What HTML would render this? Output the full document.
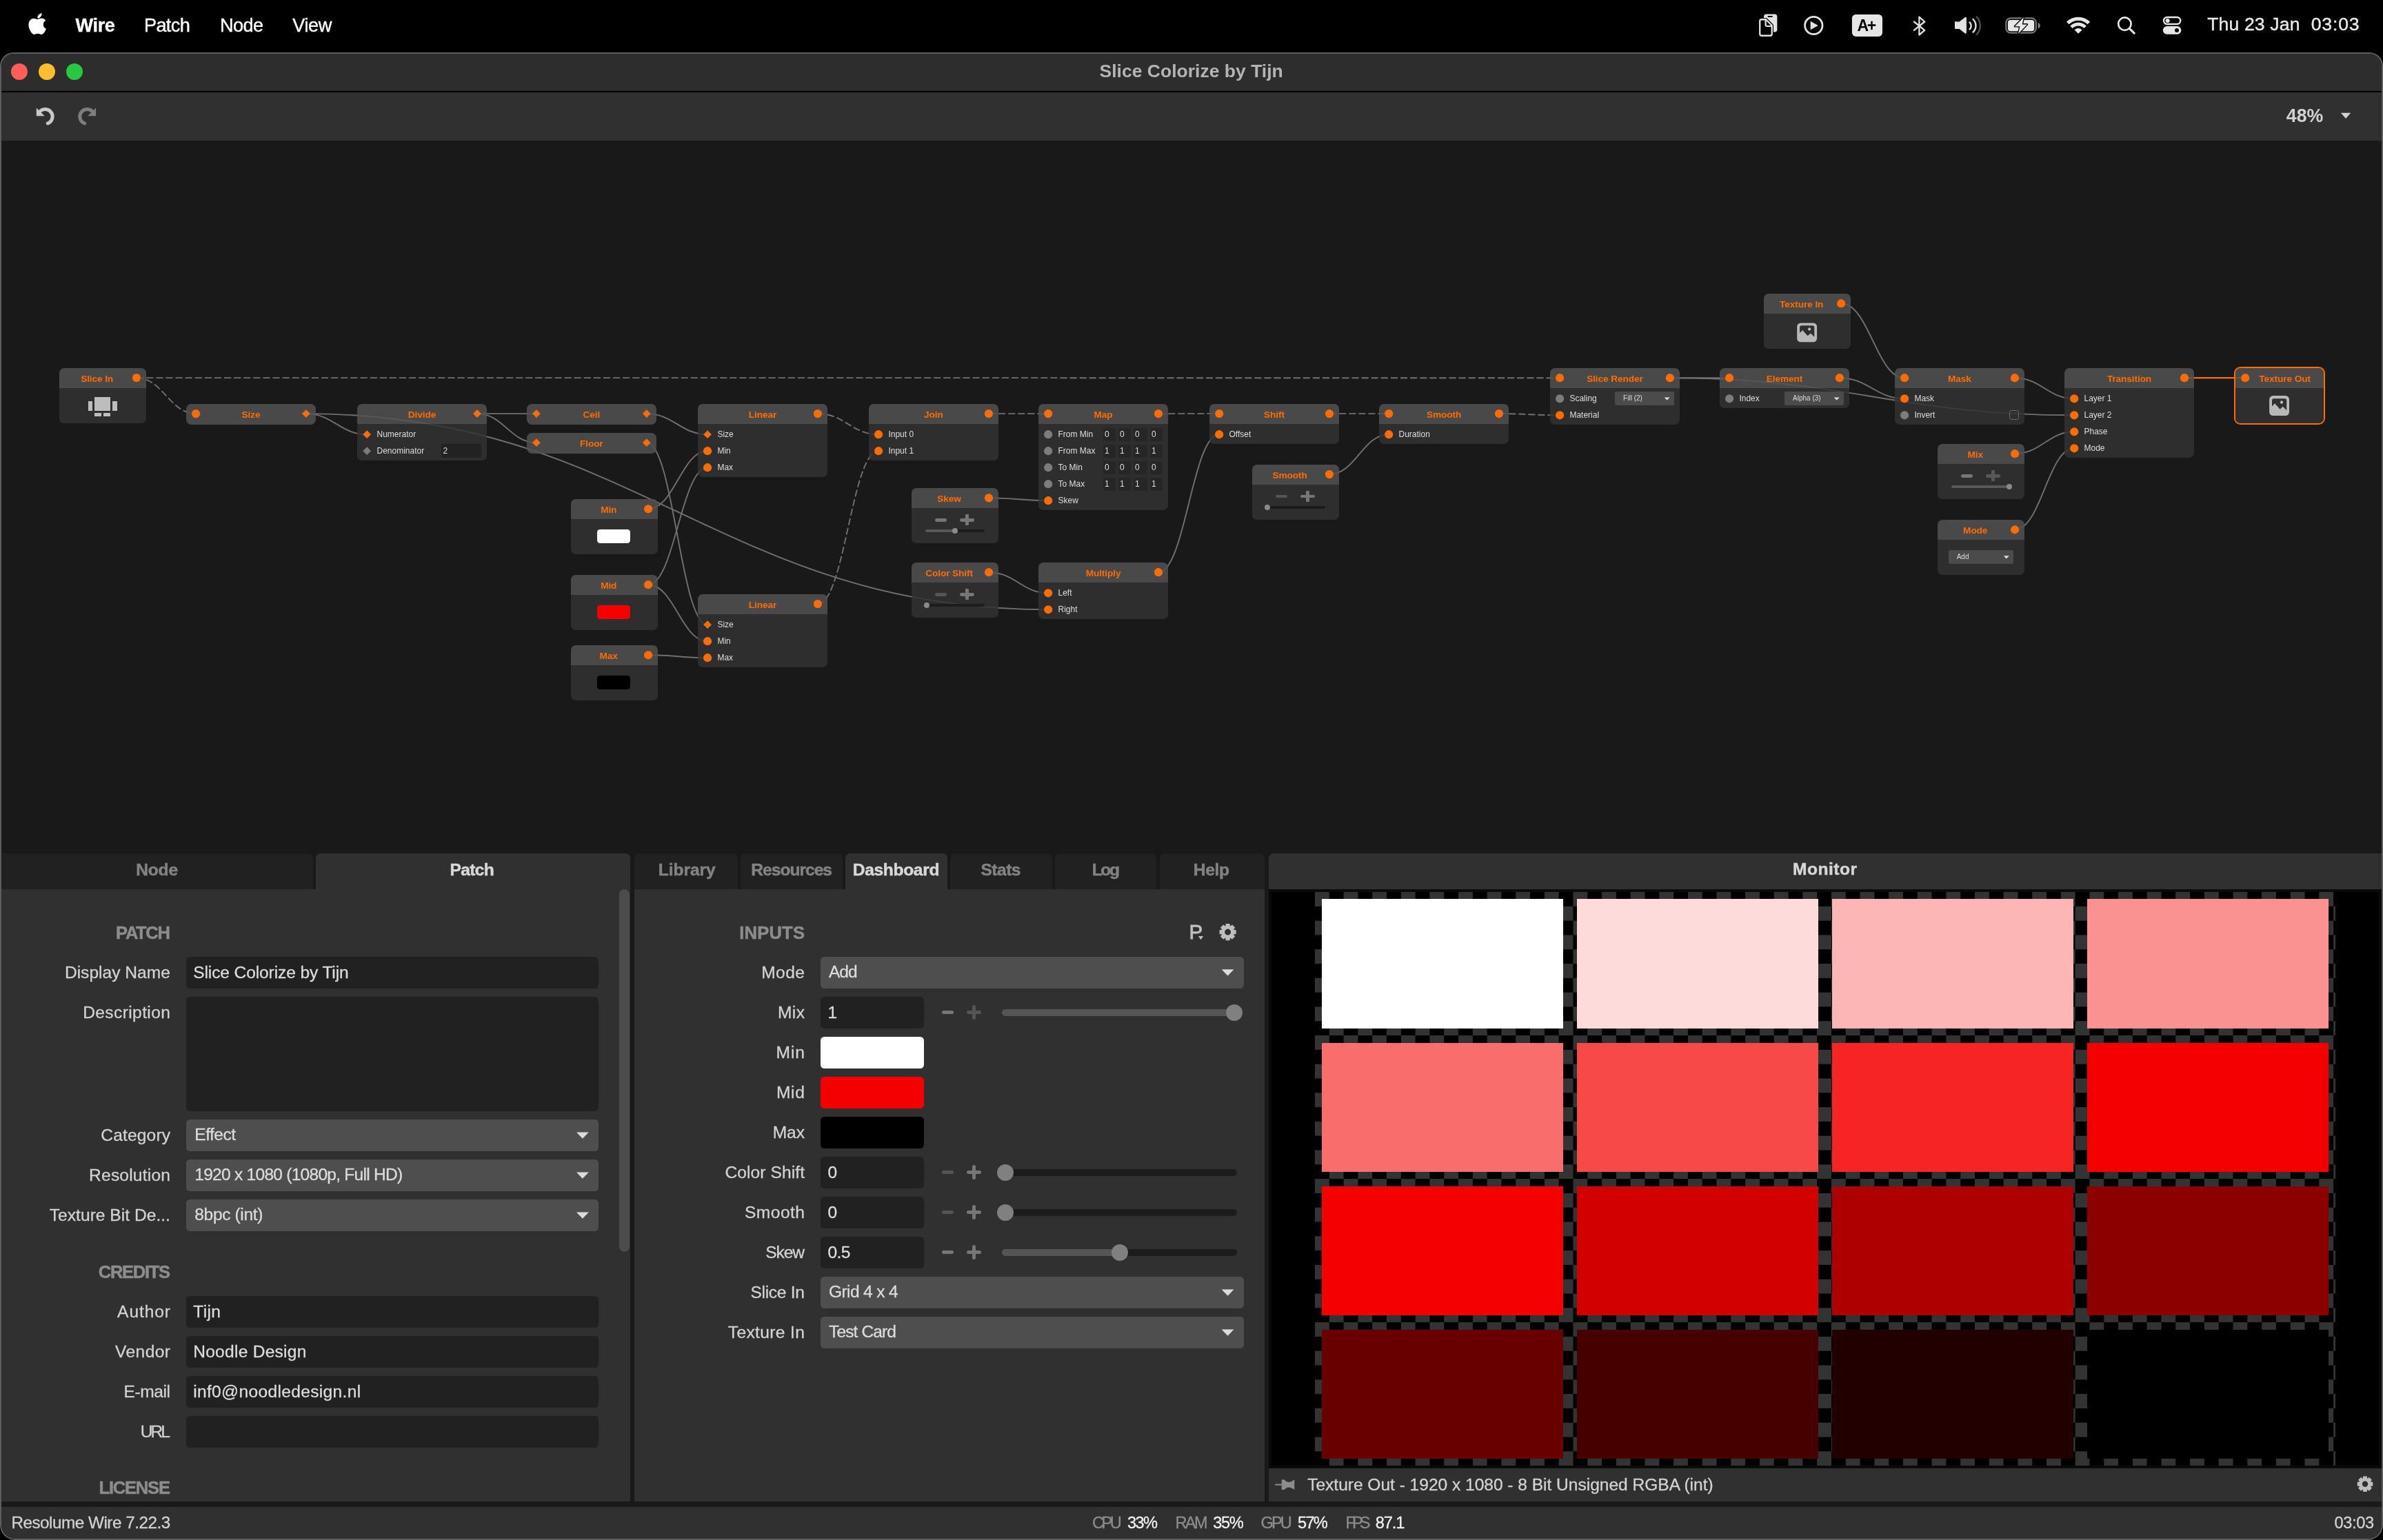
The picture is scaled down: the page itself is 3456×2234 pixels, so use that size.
<!DOCTYPE html>
<html lang="en"><head><meta charset="utf-8"><title>Slice Colorize by Tijn - Resolume Wire</title>
<style>
html,body{margin:0;padding:0;background:#000;}
body{width:3456px;height:2234px;position:relative;overflow:hidden;font-family:"Liberation Sans",sans-serif;-webkit-font-smoothing:antialiased;}
.t{position:absolute;white-space:pre;display:block;}
.b{position:absolute;box-sizing:border-box;}
svg{position:absolute;left:0;top:0;overflow:visible;}
</style></head><body>
<div id="screen" style="position:absolute;left:0;top:0;width:3456px;height:2234px;will-change:transform">
<div class="b" id="menubar" style="left:0;top:0;width:3456px;height:76px;background:#000"></div>
<span class="t" style="left:109.4px;top:18.88px;font-size:27.2px;line-height:35px;color:#ffffff;font-weight:700;letter-spacing:-0.37px;-webkit-text-stroke:0.3px #ffffff;">Wire</span>
<span class="t" style="left:209px;top:18.88px;font-size:27.2px;line-height:35px;color:#ffffff;letter-spacing:-0.69px;-webkit-text-stroke:0.4px #ffffff;">Patch</span>
<span class="t" style="left:318.9px;top:18.88px;font-size:27.2px;line-height:35px;color:#ffffff;letter-spacing:-0.61px;-webkit-text-stroke:0.4px #ffffff;">Node</span>
<span class="t" style="left:424.2px;top:18.88px;font-size:27.2px;line-height:35px;color:#ffffff;letter-spacing:-0.39px;-webkit-text-stroke:0.4px #ffffff;">View</span>
<span class="t" style="left:3201.2px;top:18.18px;font-size:26.6px;line-height:35px;color:#e8e8e8;letter-spacing:0.13px;-webkit-text-stroke:0.4px #e8e8e8;">Thu 23 Jan</span>
<span class="t" style="left:3351.7px;top:18.18px;font-size:26.6px;line-height:35px;color:#e8e8e8;letter-spacing:0.83px;-webkit-text-stroke:0.4px #e8e8e8;">03:03</span>
<svg id="menuicons" width="3456" height="76" viewBox="0 0 3456 76">
<path transform="translate(41.2,17.0) scale(0.0678,0.0688)" fill="#fff" d="M318.7 268.7c-.2-36.7 16.4-64.4 50-84.8-18.8-26.9-47.2-41.7-84.7-44.6-35.5-2.8-74.3 20.7-88.5 20.7-15 0-49.4-19.7-76.4-19.7C63.3 141.2 4 184.8 4 273.5q0 39.3 14.4 81.2c12.8 36.7 59 126.7 107.2 125.2 25.2-.6 43-17.9 75.8-17.9 31.8 0 48.3 17.9 76.4 17.9 48.6-.7 90.4-82.5 102.6-119.3-65.2-30.7-61.7-90-61.7-91.9zm-56.6-164.2c27.3-32.4 24.8-61.9 24-72.5-24.1 1.4-52 16.4-67.9 34.9-17.5 19.8-27.8 44.3-25.6 71.9 26.1 2 49.9-11.4 69.5-34.3z"/>
<rect x="2558" y="20.6" width="19.4" height="25.9" rx="3.8" fill="#e2e2e2"/>
<rect x="2563.5" y="23.1" width="7.4" height="1.8" rx="0.9" fill="#000"/>
<path d="M2554.75 28.25 H2561 L2569.75 37 V49.25 a2.5 2.5 0 0 1 -2.5 2.5 H2554.75 a2.5 2.5 0 0 1 -2.5 -2.5 V30.75 a2.5 2.5 0 0 1 2.5 -2.5 z" fill="#000" stroke="#000" stroke-width="4.6" stroke-linejoin="round"/>
<path d="M2554.75 28.25 H2561 L2569.75 37 V49.25 a2.5 2.5 0 0 1 -2.5 2.5 H2554.75 a2.5 2.5 0 0 1 -2.5 -2.5 V30.75 a2.5 2.5 0 0 1 2.5 -2.5 z" fill="#000" stroke="#e2e2e2" stroke-width="2.3" stroke-linejoin="round"/>
<path d="M2560.6 28.6 V35.8 a2.2 2.2 0 0 0 2.2 2.2 H2569.6" fill="none" stroke="#e2e2e2" stroke-width="2.2"/>
<circle cx="2630.3" cy="37" r="12.7" fill="none" stroke="#e2e2e2" stroke-width="2.8"/>
<path d="M2626 31.2 L2636.3 37 L2626 42.8 Z" fill="#e2e2e2" stroke="#e2e2e2" stroke-width="0.6" stroke-linejoin="round"/>
<rect x="2685.9" y="20.9" width="44.1" height="32" rx="5.6" fill="#e6e6e6"/>
<path d="M2775.9 31.5 L2791.2 43.8 L2783.4 50.6 V24.6 L2791.2 31.5 L2775.9 43.8" fill="none" stroke="#e2e2e2" stroke-width="2.3" stroke-linejoin="round" stroke-linecap="round"/>
<path d="M2836.6 31.4 h5 l8.4 -6.4 a1.2 1.2 0 0 1 1.9 1 v21.4 a1.2 1.2 0 0 1 -1.9 1 l-8.4 -6.4 h-5 a1.6 1.6 0 0 1 -1.6 -1.6 v-8.4 a1.6 1.6 0 0 1 1.6 -1.6 z" fill="#e2e2e2"/>
<path d="M2856.6 32.4 a7 7 0 0 1 0 10" fill="none" stroke="#e2e2e2" stroke-width="2.4" stroke-linecap="round"/>
<path d="M2861.6 28 a13.2 13.2 0 0 1 0 18.6" fill="none" stroke="#e2e2e2" stroke-width="2.4" stroke-linecap="round"/>
<path d="M2866.8 24.6 a18.6 18.6 0 0 1 0 25.4" fill="none" stroke="#505050" stroke-width="2.4" stroke-linecap="round"/>
<rect x="2909.3" y="26.3" width="43.5" height="21.4" rx="6.6" fill="none" stroke="#767676" stroke-width="2.2"/>
<path d="M2955.8 33.1 a4.3 4.3 0 0 1 0 8.1 z" fill="#8a8a8a"/>
<rect x="2911.9" y="28.9" width="38.3" height="16.4" rx="3.8" fill="#e6e6e6"/>
<path d="M2935 25 L2922 38.2 H2929.4 L2927.1 49 L2940 35.4 H2932.7 Z" fill="#e6e6e6" stroke="#000" stroke-width="2.6" stroke-linejoin="round" paint-order="stroke"/>
<path d="M2998.8 33.6 A21.6 21.6 0 0 1 3029.4 33.6" fill="none" stroke="#e6e6e6" stroke-width="5"/>
<path d="M3004 39.4 A14.2 14.2 0 0 1 3024.2 39.4" fill="none" stroke="#e6e6e6" stroke-width="4.8"/>
<path d="M3014.1 48.8 L3008.6 43.4 A7.7 7.7 0 0 1 3019.6 43.4 Z" fill="#e6e6e6"/>
<circle cx="3081.4" cy="34.6" r="9.2" fill="none" stroke="#e6e6e6" stroke-width="2.7"/>
<path d="M3088.2 41.4 L3095.2 48.2" stroke="#e6e6e6" stroke-width="3" stroke-linecap="round"/>
<rect x="3138" y="25" width="24.2" height="10" rx="5" fill="none" stroke="#e6e6e6" stroke-width="2.4"/>
<circle cx="3143.6" cy="30" r="3" fill="#e6e6e6"/>
<rect x="3136.8" y="38" width="26.6" height="11.8" rx="5.9" fill="#e6e6e6"/>
<circle cx="3157" cy="43.9" r="3" fill="#000"/>
</svg>
<span class="t" style="left:2693.55px;top:21.93px;font-size:23px;line-height:30px;color:#000;font-weight:700;letter-spacing:-2.34px;">A+</span>
<div class="b" id="window" style="left:0;top:76px;width:3456px;height:2158px;background:#191919;border-radius:20px 20px 22px 22px;overflow:hidden;box-shadow:inset 0 0 0 2px #5e5e5e;"></div>
<div class="b" id="titlebar" style="left:2px;top:78px;width:3452px;height:54.4px;background:#2d2d2d;border-radius:18px 18px 0 0"></div>
<div class="b" style="left:2px;top:132.2px;width:3452px;height:1.5px;background:#000"></div>
<div class="b" id="toolbar" style="left:2px;top:133.7px;width:3452px;height:70.2px;background:#303030"></div>
<div class="b" style="left:16px;top:92.1px;width:24px;height:24px;border-radius:50%;background:#ff5f57"></div>
<div class="b" style="left:56px;top:92.1px;width:24px;height:24px;border-radius:50%;background:#febc2e"></div>
<div class="b" style="left:96px;top:92.1px;width:24px;height:24px;border-radius:50%;background:#28c840"></div>
<span class="t" style="left:1594.55px;top:85.92px;font-size:26.5px;line-height:34px;color:#b4b4b4;font-weight:700;letter-spacing:0.01px;">Slice Colorize by Tijn</span>
<span class="t" style="left:3315.8px;top:151.43px;font-size:26.75px;line-height:35px;color:#d2d2d2;font-weight:700;letter-spacing:-0.02px;">48%</span>
<svg id="toolicons" width="3456" height="220" viewBox="0 0 3456 220">
<path d="M3394.9 163.8 h14.3 l-7.15 8.2 z" fill="#d2d2d2"/>
<g transform="translate(52.5,0)"><path d="M5.6 161.5 A10.6 10.6 0 1 1 16.7 179.0" fill="none" stroke="#c8c8c8" stroke-width="5" stroke-linecap="round"/><path d="M0.3 156.6 V168.3 H12.2 Z" fill="#c8c8c8"/></g>
<g transform="translate(139.4,0) scale(-1,1)"><path d="M5.6 161.5 A10.6 10.6 0 1 1 16.7 179.0" fill="none" stroke="#7e7e7e" stroke-width="5" stroke-linecap="round"/><path d="M0.3 156.6 V168.3 H12.2 Z" fill="#7e7e7e"/></g>
</svg>
<div class="b" id="statusbar" style="left:2px;top:2186px;width:3452px;height:46px;background:#303030;border-radius:0 0 20px 20px"></div>
<span class="t" style="left:16.4px;top:2193.18px;font-size:24.3px;line-height:32px;color:#d2d2d2;letter-spacing:-0.5px;-webkit-text-stroke:0.3px #d2d2d2;">Resolume Wire 7.22.3</span>
<span class="t" style="left:1584.1px;top:2194.12px;font-size:23.6px;line-height:31px;color:#8c8c8c;letter-spacing:-3.61px;-webkit-text-stroke:0.3px #8c8c8c;">CPU</span>
<span class="t" style="left:1635.1px;top:2194.12px;font-size:23.6px;line-height:31px;color:#f0f0f0;letter-spacing:-1.67px;-webkit-text-stroke:0.3px #f0f0f0;">33%</span>
<span class="t" style="left:1704.4px;top:2194.12px;font-size:23.6px;line-height:31px;color:#8c8c8c;letter-spacing:-2.62px;-webkit-text-stroke:0.3px #8c8c8c;">RAM</span>
<span class="t" style="left:1759.3px;top:2194.12px;font-size:23.6px;line-height:31px;color:#f0f0f0;letter-spacing:-1.37px;-webkit-text-stroke:0.3px #f0f0f0;">35%</span>
<span class="t" style="left:1828.6px;top:2194.12px;font-size:23.6px;line-height:31px;color:#8c8c8c;letter-spacing:-3.02px;-webkit-text-stroke:0.3px #8c8c8c;">GPU</span>
<span class="t" style="left:1882.1px;top:2194.12px;font-size:23.6px;line-height:31px;color:#f0f0f0;letter-spacing:-1.82px;-webkit-text-stroke:0.3px #f0f0f0;">57%</span>
<span class="t" style="left:1951.5px;top:2194.12px;font-size:23.6px;line-height:31px;color:#8c8c8c;letter-spacing:-5px;-webkit-text-stroke:0.3px #8c8c8c;">FPS</span>
<span class="t" style="left:1994.7px;top:2194.12px;font-size:23.6px;line-height:31px;color:#f0f0f0;letter-spacing:-1.11px;-webkit-text-stroke:0.3px #f0f0f0;">87.1</span>
<span class="t" style="left:3385.5px;top:2194.12px;font-size:23.6px;line-height:31px;color:#d2d2d2;letter-spacing:-0.34px;-webkit-text-stroke:0.3px #d2d2d2;">03:03</span>
<div class="b" id="canvas" style="left:2px;top:203.9px;width:3452px;height:1034.1px;background:#191919"></div>
<svg id="wires" width="3456" height="1240" viewBox="0 0 3456 1240"><g fill="none" stroke="#707070" stroke-width="1.9">
<path d="M198 548.1 C1106.2 548.1 1353.9 548.2 2262.1 548.2" stroke-dasharray="10.2 3.9"/>
<path d="M198 548.1 C235.88 548.1 246.22 600.1 284.1 600.1" stroke-dasharray="10.2 3.9"/>
<path d="M443.9 600.1 C482.75 600.1 493.35 630.2 532.2 630.2"/>
<path d="M443.9 600.1 C917.47 600.1 1046.63 884.3 1520.2 884.3"/>
<path d="M692 600.1 C729.82 600.1 740.13 600.1 777.95 600.1"/>
<path d="M692 600.1 C729.82 600.1 740.13 642.2 777.95 642.2"/>
<path d="M937.75 600.1 C976.62 600.1 987.23 630.2 1026.1 630.2"/>
<path d="M937.75 642.2 C976.62 642.2 987.23 906.2 1026.1 906.2"/>
<path d="M940.1 738.3 C977.94 738.3 988.26 654.2 1026.1 654.2"/>
<path d="M940.1 848.2 C977.94 848.2 988.26 678.2 1026.1 678.2"/>
<path d="M940.1 848.2 C977.94 848.2 988.26 930.2 1026.1 930.2"/>
<path d="M940.1 950.3 C977.94 950.3 988.26 954.2 1026.1 954.2"/>
<path d="M1185.9 600.1 C1224.71 600.1 1235.29 630.2 1274.1 630.2" stroke-dasharray="10.2 3.9"/>
<path d="M1185.9 876.1 C1224.71 876.1 1235.29 654.2 1274.1 654.2" stroke-dasharray="10.2 3.9"/>
<path d="M1433.9 600.1 C1471.87 600.1 1482.23 600.1 1520.2 600.1" stroke-dasharray="10.2 3.9"/>
<path d="M1434 722.4 C1471.93 722.4 1482.27 726.2 1520.2 726.2"/>
<path d="M1434 830.2 C1471.93 830.2 1482.27 860.3 1520.2 860.3"/>
<path d="M1680 600.1 C1718.81 600.1 1729.39 600.1 1768.2 600.1" stroke-dasharray="10.2 3.9"/>
<path d="M1680 830.2 C1718.81 830.2 1729.39 630.2 1768.2 630.2"/>
<path d="M1928 600.1 C1965.93 600.1 1976.27 600.1 2014.2 600.1" stroke-dasharray="10.2 3.9"/>
<path d="M1927.9 688.1 C1965.87 688.1 1976.23 630.2 2014.2 630.2"/>
<path d="M2174 600.1 C2212.76 600.1 2223.34 602.3 2262.1 602.3" stroke-dasharray="10.2 3.9"/>
<path d="M2421.9 548.2 C2459.83 548.2 2470.17 548.2 2508.1 548.2"/>
<path d="M2421.9 548.2 C2679.87 548.2 2750.23 602.3 3008.2 602.3"/>
<path d="M2667.9 548.2 C2709.35 548.2 2720.65 578.3 2762.1 578.3"/>
<path d="M2670.1 440.2 C2710.58 440.2 2721.62 548.2 2762.1 548.2"/>
<path d="M2921.9 548.2 C2959.87 548.2 2970.23 578.3 3008.2 578.3"/>
<path d="M2922.1 658.2 C2959.98 658.2 2970.32 626.3 3008.2 626.3"/>
<path d="M2922.1 768.3 C2959.98 768.3 2970.32 650.3 3008.2 650.3"/>
<path d="M3168 548.2 C3207.16 548.2 3217.84 548.2 3257 548.2" stroke="#ff6c00" stroke-width="2.2"/>
</g></svg>
<div id="nodes">
<div class="b" style="left:86px;top:562.8px;width:126px;height:51px;background:rgba(51,51,51,0.85);border-radius:0 0 7px 7px;"></div>
<div class="b" style="left:86px;top:534px;width:126px;height:28.8px;background:rgba(82,82,82,0.85);border-radius:7px 7px 0 0;"></div>
<span class="t" style="left:117.13px;top:541.15px;font-size:13.7px;line-height:18px;color:#ff6c00;font-weight:700;letter-spacing:-0.12px;">Slice In</span>
<div class="b" style="left:137px;top:576.2px;width:23.3px;height:20.3px;background:#bdbdbd;"></div>
<div class="b" style="left:127.7px;top:582.3px;width:6.5px;height:14.2px;background:#bdbdbd;"></div>
<div class="b" style="left:163.2px;top:582.3px;width:6.5px;height:14.2px;background:#bdbdbd;"></div>
<div class="b" style="left:137px;top:599.2px;width:10.2px;height:4.7px;background:#bdbdbd;"></div>
<div class="b" style="left:149.7px;top:599.2px;width:10.4px;height:4.7px;background:#bdbdbd;"></div>
<div class="b" style="left:270.1px;top:586px;width:187.8px;height:29.5px;background:rgba(82,82,82,0.85);border-radius:7.5px;"></div>
<span class="t" style="left:350.47px;top:593.15px;font-size:13.7px;line-height:18px;color:#ff6c00;font-weight:700;letter-spacing:-0.12px;">Size</span>
<div class="b" style="left:518.2px;top:614.8px;width:187.8px;height:53px;background:rgba(51,51,51,0.85);border-radius:0 0 7px 7px;"></div>
<div class="b" style="left:518.2px;top:586px;width:187.8px;height:28.8px;background:rgba(82,82,82,0.85);border-radius:7px 7px 0 0;"></div>
<span class="t" style="left:591.84px;top:593.15px;font-size:13.7px;line-height:18px;color:#ff6c00;font-weight:700;letter-spacing:-0.12px;">Divide</span>
<span class="t" style="left:546.5px;top:622.04px;font-size:12px;line-height:16px;color:#dedede;">Numerator</span>
<span class="t" style="left:546.5px;top:646.04px;font-size:12px;line-height:16px;color:#dedede;">Denominator</span>
<div class="b" style="left:640.2px;top:644.35px;width:57.7px;height:19.7px;background:#222222;border-radius:3px;"></div>
<span class="t" style="left:642.4px;top:646.04px;font-size:12px;line-height:16px;color:#dedede;">2</span>
<div class="b" style="left:763.95px;top:586px;width:187.8px;height:29.5px;background:rgba(82,82,82,0.85);border-radius:7.5px;"></div>
<span class="t" style="left:845.47px;top:593.15px;font-size:13.7px;line-height:18px;color:#ff6c00;font-weight:700;letter-spacing:-0.12px;">Ceil</span>
<div class="b" style="left:763.95px;top:628.1px;width:187.8px;height:29.5px;background:rgba(82,82,82,0.85);border-radius:7.5px;"></div>
<span class="t" style="left:840.97px;top:635.25px;font-size:13.7px;line-height:18px;color:#ff6c00;font-weight:700;letter-spacing:-0.12px;">Floor</span>
<div class="b" style="left:1012.1px;top:614.8px;width:187.8px;height:77px;background:rgba(51,51,51,0.85);border-radius:0 0 7px 7px;"></div>
<div class="b" style="left:1012.1px;top:586px;width:187.8px;height:28.8px;background:rgba(82,82,82,0.85);border-radius:7px 7px 0 0;"></div>
<span class="t" style="left:1085.74px;top:593.15px;font-size:13.7px;line-height:18px;color:#ff6c00;font-weight:700;letter-spacing:-0.12px;">Linear</span>
<span class="t" style="left:1040.4px;top:622.04px;font-size:12px;line-height:16px;color:#dedede;">Size</span>
<span class="t" style="left:1040.4px;top:646.04px;font-size:12px;line-height:16px;color:#dedede;">Min</span>
<span class="t" style="left:1040.4px;top:670.04px;font-size:12px;line-height:16px;color:#dedede;">Max</span>
<div class="b" style="left:1260.1px;top:614.8px;width:187.8px;height:53px;background:rgba(51,51,51,0.85);border-radius:0 0 7px 7px;"></div>
<div class="b" style="left:1260.1px;top:586px;width:187.8px;height:28.8px;background:rgba(82,82,82,0.85);border-radius:7px 7px 0 0;"></div>
<span class="t" style="left:1340.1px;top:593.15px;font-size:13.7px;line-height:18px;color:#ff6c00;font-weight:700;letter-spacing:-0.12px;">Join</span>
<span class="t" style="left:1288.4px;top:622.04px;font-size:12px;line-height:16px;color:#dedede;">Input 0</span>
<span class="t" style="left:1288.4px;top:646.04px;font-size:12px;line-height:16px;color:#dedede;">Input 1</span>
<div class="b" style="left:1506.2px;top:614.8px;width:187.8px;height:125px;background:rgba(51,51,51,0.85);border-radius:0 0 7px 7px;"></div>
<div class="b" style="left:1506.2px;top:586px;width:187.8px;height:28.8px;background:rgba(82,82,82,0.85);border-radius:7px 7px 0 0;"></div>
<span class="t" style="left:1586.52px;top:593.15px;font-size:13.7px;line-height:18px;color:#ff6c00;font-weight:700;letter-spacing:-0.12px;">Map</span>
<span class="t" style="left:1534.5px;top:622.04px;font-size:12px;line-height:16px;color:#dedede;">From Min</span>
<div class="b" style="left:1600px;top:620.5px;width:17.9px;height:19.4px;background:#262626;border-radius:2.5px;"></div>
<span class="t" style="left:1602px;top:622.04px;font-size:12px;line-height:16px;color:#dedede;">0</span>
<div class="b" style="left:1622px;top:620.5px;width:17.9px;height:19.4px;background:#262626;border-radius:2.5px;"></div>
<span class="t" style="left:1624px;top:622.04px;font-size:12px;line-height:16px;color:#dedede;">0</span>
<div class="b" style="left:1644px;top:620.5px;width:19.8px;height:19.4px;background:#262626;border-radius:2.5px;"></div>
<span class="t" style="left:1646px;top:622.04px;font-size:12px;line-height:16px;color:#dedede;">0</span>
<div class="b" style="left:1668px;top:620.5px;width:17.9px;height:19.4px;background:#262626;border-radius:2.5px;"></div>
<span class="t" style="left:1670px;top:622.04px;font-size:12px;line-height:16px;color:#dedede;">0</span>
<span class="t" style="left:1534.5px;top:646.04px;font-size:12px;line-height:16px;color:#dedede;">From Max</span>
<div class="b" style="left:1600px;top:644.5px;width:17.9px;height:19.4px;background:#262626;border-radius:2.5px;"></div>
<span class="t" style="left:1602px;top:646.04px;font-size:12px;line-height:16px;color:#dedede;">1</span>
<div class="b" style="left:1622px;top:644.5px;width:17.9px;height:19.4px;background:#262626;border-radius:2.5px;"></div>
<span class="t" style="left:1624px;top:646.04px;font-size:12px;line-height:16px;color:#dedede;">1</span>
<div class="b" style="left:1644px;top:644.5px;width:19.8px;height:19.4px;background:#262626;border-radius:2.5px;"></div>
<span class="t" style="left:1646px;top:646.04px;font-size:12px;line-height:16px;color:#dedede;">1</span>
<div class="b" style="left:1668px;top:644.5px;width:17.9px;height:19.4px;background:#262626;border-radius:2.5px;"></div>
<span class="t" style="left:1670px;top:646.04px;font-size:12px;line-height:16px;color:#dedede;">1</span>
<span class="t" style="left:1534.5px;top:670.04px;font-size:12px;line-height:16px;color:#dedede;">To Min</span>
<div class="b" style="left:1600px;top:668.5px;width:17.9px;height:19.4px;background:#262626;border-radius:2.5px;"></div>
<span class="t" style="left:1602px;top:670.04px;font-size:12px;line-height:16px;color:#dedede;">0</span>
<div class="b" style="left:1622px;top:668.5px;width:17.9px;height:19.4px;background:#262626;border-radius:2.5px;"></div>
<span class="t" style="left:1624px;top:670.04px;font-size:12px;line-height:16px;color:#dedede;">0</span>
<div class="b" style="left:1644px;top:668.5px;width:19.8px;height:19.4px;background:#262626;border-radius:2.5px;"></div>
<span class="t" style="left:1646px;top:670.04px;font-size:12px;line-height:16px;color:#dedede;">0</span>
<div class="b" style="left:1668px;top:668.5px;width:17.9px;height:19.4px;background:#262626;border-radius:2.5px;"></div>
<span class="t" style="left:1670px;top:670.04px;font-size:12px;line-height:16px;color:#dedede;">0</span>
<span class="t" style="left:1534.5px;top:694.04px;font-size:12px;line-height:16px;color:#dedede;">To Max</span>
<div class="b" style="left:1600px;top:692.5px;width:17.9px;height:19.4px;background:#262626;border-radius:2.5px;"></div>
<span class="t" style="left:1602px;top:694.04px;font-size:12px;line-height:16px;color:#dedede;">1</span>
<div class="b" style="left:1622px;top:692.5px;width:17.9px;height:19.4px;background:#262626;border-radius:2.5px;"></div>
<span class="t" style="left:1624px;top:694.04px;font-size:12px;line-height:16px;color:#dedede;">1</span>
<div class="b" style="left:1644px;top:692.5px;width:19.8px;height:19.4px;background:#262626;border-radius:2.5px;"></div>
<span class="t" style="left:1646px;top:694.04px;font-size:12px;line-height:16px;color:#dedede;">1</span>
<div class="b" style="left:1668px;top:692.5px;width:17.9px;height:19.4px;background:#262626;border-radius:2.5px;"></div>
<span class="t" style="left:1670px;top:694.04px;font-size:12px;line-height:16px;color:#dedede;">1</span>
<span class="t" style="left:1534.5px;top:718.04px;font-size:12px;line-height:16px;color:#dedede;">Skew</span>
<div class="b" style="left:1754.2px;top:614.8px;width:187.8px;height:29px;background:rgba(51,51,51,0.85);border-radius:0 0 7px 7px;"></div>
<div class="b" style="left:1754.2px;top:586px;width:187.8px;height:28.8px;background:rgba(82,82,82,0.85);border-radius:7px 7px 0 0;"></div>
<span class="t" style="left:1833.12px;top:593.15px;font-size:13.7px;line-height:18px;color:#ff6c00;font-weight:700;letter-spacing:-0.12px;">Shift</span>
<span class="t" style="left:1782.5px;top:622.04px;font-size:12px;line-height:16px;color:#dedede;">Offset</span>
<div class="b" style="left:2000.2px;top:614.8px;width:187.8px;height:29px;background:rgba(51,51,51,0.85);border-radius:0 0 7px 7px;"></div>
<div class="b" style="left:2000.2px;top:586px;width:187.8px;height:28.8px;background:rgba(82,82,82,0.85);border-radius:7px 7px 0 0;"></div>
<span class="t" style="left:2068.91px;top:593.15px;font-size:13.7px;line-height:18px;color:#ff6c00;font-weight:700;letter-spacing:-0.12px;">Smooth</span>
<span class="t" style="left:2028.5px;top:622.04px;font-size:12px;line-height:16px;color:#dedede;">Duration</span>
<div class="b" style="left:2248.1px;top:562.9px;width:187.8px;height:53px;background:rgba(51,51,51,0.85);border-radius:0 0 7px 7px;"></div>
<div class="b" style="left:2248.1px;top:534.1px;width:187.8px;height:28.8px;background:rgba(82,82,82,0.85);border-radius:7px 7px 0 0;"></div>
<span class="t" style="left:2301.16px;top:541.25px;font-size:13.7px;line-height:18px;color:#ff6c00;font-weight:700;letter-spacing:-0.12px;">Slice Render</span>
<span class="t" style="left:2276.4px;top:570.14px;font-size:12px;line-height:16px;color:#dedede;">Scaling</span>
<div class="b" style="left:2342px;top:568.45px;width:86px;height:19.7px;background:#4b4b4b;border-radius:2.5px;"></div>
<span class="t" style="left:2354.1px;top:570.94px;font-size:10px;line-height:13px;color:#dedede;">Fill (2)</span>
<span class="t" style="left:2276.4px;top:594.14px;font-size:12px;line-height:16px;color:#dedede;">Material</span>
<div class="b" style="left:2494.1px;top:562.9px;width:187.8px;height:29px;background:rgba(51,51,51,0.85);border-radius:0 0 7px 7px;"></div>
<div class="b" style="left:2494.1px;top:534.1px;width:187.8px;height:28.8px;background:rgba(82,82,82,0.85);border-radius:7px 7px 0 0;"></div>
<span class="t" style="left:2561.71px;top:541.25px;font-size:13.7px;line-height:18px;color:#ff6c00;font-weight:700;letter-spacing:-0.12px;">Element</span>
<span class="t" style="left:2522.4px;top:570.14px;font-size:12px;line-height:16px;color:#dedede;">Index</span>
<div class="b" style="left:2588px;top:568.45px;width:86px;height:19.7px;background:#4b4b4b;border-radius:2.5px;"></div>
<span class="t" style="left:2600.1px;top:570.94px;font-size:10px;line-height:13px;color:#dedede;">Alpha (3)</span>
<div class="b" style="left:2748.1px;top:562.9px;width:187.8px;height:53px;background:rgba(51,51,51,0.85);border-radius:0 0 7px 7px;"></div>
<div class="b" style="left:2748.1px;top:534.1px;width:187.8px;height:28.8px;background:rgba(82,82,82,0.85);border-radius:7px 7px 0 0;"></div>
<span class="t" style="left:2825.04px;top:541.25px;font-size:13.7px;line-height:18px;color:#ff6c00;font-weight:700;letter-spacing:-0.12px;">Mask</span>
<span class="t" style="left:2776.4px;top:570.14px;font-size:12px;line-height:16px;color:#dedede;">Mask</span>
<span class="t" style="left:2776.4px;top:594.14px;font-size:12px;line-height:16px;color:#dedede;">Invert</span>
<div class="b" style="left:2913.9px;top:595.3px;width:14px;height:14px;background:transparent;border-radius:3.4px;border:1.6px solid #6c6c6c;"></div>
<div class="b" style="left:2994.2px;top:562.9px;width:187.8px;height:101px;background:rgba(51,51,51,0.85);border-radius:0 0 7px 7px;"></div>
<div class="b" style="left:2994.2px;top:534.1px;width:187.8px;height:28.8px;background:rgba(82,82,82,0.85);border-radius:7px 7px 0 0;"></div>
<span class="t" style="left:3055.91px;top:541.25px;font-size:13.7px;line-height:18px;color:#ff6c00;font-weight:700;letter-spacing:-0.12px;">Transition</span>
<span class="t" style="left:3022.5px;top:570.14px;font-size:12px;line-height:16px;color:#dedede;">Layer 1</span>
<span class="t" style="left:3022.5px;top:594.14px;font-size:12px;line-height:16px;color:#dedede;">Layer 2</span>
<span class="t" style="left:3022.5px;top:618.14px;font-size:12px;line-height:16px;color:#dedede;">Phase</span>
<span class="t" style="left:3022.5px;top:642.14px;font-size:12px;line-height:16px;color:#dedede;">Mode</span>
<div class="b" style="left:3239.9px;top:531.8px;width:132.2px;height:84.3px;background:transparent;border-radius:9.3px;border:2.3px solid #ff6c00;"></div>
<div class="b" style="left:3242.2px;top:562.9px;width:127.6px;height:51px;background:rgba(51,51,51,0.85);border-radius:0 0 7px 7px;"></div>
<div class="b" style="left:3242.2px;top:534.1px;width:127.6px;height:28.8px;background:rgba(82,82,82,0.85);border-radius:7px 7px 0 0;"></div>
<span class="t" style="left:3276.37px;top:541.25px;font-size:13.7px;line-height:18px;color:#ff6c00;font-weight:700;letter-spacing:-0.12px;">Texture Out</span>
<div class="b" style="left:2558.1px;top:454.9px;width:126px;height:51px;background:rgba(51,51,51,0.85);border-radius:0 0 7px 7px;"></div>
<div class="b" style="left:2558.1px;top:426.1px;width:126px;height:28.8px;background:rgba(82,82,82,0.85);border-radius:7px 7px 0 0;"></div>
<span class="t" style="left:2581.11px;top:433.25px;font-size:13.7px;line-height:18px;color:#ff6c00;font-weight:700;letter-spacing:-0.12px;">Texture In</span>
<div class="b" style="left:828.1px;top:753px;width:126px;height:51px;background:rgba(51,51,51,0.85);border-radius:0 0 7px 7px;"></div>
<div class="b" style="left:828.1px;top:724.2px;width:126px;height:28.8px;background:rgba(82,82,82,0.85);border-radius:7px 7px 0 0;"></div>
<span class="t" style="left:871.13px;top:731.35px;font-size:13.7px;line-height:18px;color:#ff6c00;font-weight:700;letter-spacing:-0.12px;">Min</span>
<div class="b" style="left:866.1px;top:767.9px;width:48px;height:20.3px;background:#ffffff;border-radius:4.2px;"></div>
<div class="b" style="left:828.1px;top:862.9px;width:126px;height:51px;background:rgba(51,51,51,0.85);border-radius:0 0 7px 7px;"></div>
<div class="b" style="left:828.1px;top:834.1px;width:126px;height:28.8px;background:rgba(82,82,82,0.85);border-radius:7px 7px 0 0;"></div>
<span class="t" style="left:871.13px;top:841.25px;font-size:13.7px;line-height:18px;color:#ff6c00;font-weight:700;letter-spacing:-0.12px;">Mid</span>
<div class="b" style="left:866.1px;top:877.8px;width:48px;height:20.3px;background:#f50000;border-radius:4.2px;"></div>
<div class="b" style="left:828.1px;top:965px;width:126px;height:51px;background:rgba(51,51,51,0.85);border-radius:0 0 7px 7px;"></div>
<div class="b" style="left:828.1px;top:936.2px;width:126px;height:28.8px;background:rgba(82,82,82,0.85);border-radius:7px 7px 0 0;"></div>
<span class="t" style="left:869.59px;top:943.35px;font-size:13.7px;line-height:18px;color:#ff6c00;font-weight:700;letter-spacing:-0.12px;">Max</span>
<div class="b" style="left:866.1px;top:979.9px;width:48px;height:20.3px;background:#000000;border-radius:4.2px;"></div>
<div class="b" style="left:1012.1px;top:890.8px;width:187.8px;height:77px;background:rgba(51,51,51,0.85);border-radius:0 0 7px 7px;"></div>
<div class="b" style="left:1012.1px;top:862px;width:187.8px;height:28.8px;background:rgba(82,82,82,0.85);border-radius:7px 7px 0 0;"></div>
<span class="t" style="left:1085.74px;top:869.15px;font-size:13.7px;line-height:18px;color:#ff6c00;font-weight:700;letter-spacing:-0.12px;">Linear</span>
<span class="t" style="left:1040.4px;top:898.04px;font-size:12px;line-height:16px;color:#dedede;">Size</span>
<span class="t" style="left:1040.4px;top:922.04px;font-size:12px;line-height:16px;color:#dedede;">Min</span>
<span class="t" style="left:1040.4px;top:946.04px;font-size:12px;line-height:16px;color:#dedede;">Max</span>
<div class="b" style="left:1322px;top:737.1px;width:126px;height:51px;background:rgba(51,51,51,0.85);border-radius:0 0 7px 7px;"></div>
<div class="b" style="left:1322px;top:708.3px;width:126px;height:28.8px;background:rgba(82,82,82,0.85);border-radius:7px 7px 0 0;"></div>
<span class="t" style="left:1359.36px;top:715.45px;font-size:13.7px;line-height:18px;color:#ff6c00;font-weight:700;letter-spacing:-0.12px;">Skew</span>
<div class="b" style="left:1356px;top:751.9px;width:17.2px;height:4.9px;background:#767676;border-radius:2.45px;"></div>
<div class="b" style="left:1392.2px;top:751.9px;width:20.5px;height:4.9px;background:#767676;border-radius:2.45px;"></div>
<div class="b" style="left:1399.7px;top:746px;width:5.4px;height:16px;background:#767676;border-radius:1px;"></div>
<div class="b" style="left:1342.3px;top:768.1px;width:85.4px;height:3.9px;background:#1c1c1c;border-radius:1.95px;"></div>
<div class="b" style="left:1342.3px;top:768.1px;width:42.7px;height:3.9px;background:#585858;border-radius:1.95px;"></div>
<div class="b" style="left:1380.9px;top:765.9px;width:8.2px;height:8.2px;background:#8a8a8a;border-radius:50%;"></div>
<div class="b" style="left:1322px;top:844.9px;width:126px;height:51px;background:rgba(51,51,51,0.85);border-radius:0 0 7px 7px;"></div>
<div class="b" style="left:1322px;top:816.1px;width:126px;height:28.8px;background:rgba(82,82,82,0.85);border-radius:7px 7px 0 0;"></div>
<span class="t" style="left:1342.29px;top:823.25px;font-size:13.7px;line-height:18px;color:#ff6c00;font-weight:700;letter-spacing:-0.12px;">Color Shift</span>
<div class="b" style="left:1356px;top:859.7px;width:17.2px;height:4.9px;background:#555555;border-radius:2.45px;"></div>
<div class="b" style="left:1392.2px;top:859.7px;width:20.5px;height:4.9px;background:#767676;border-radius:2.45px;"></div>
<div class="b" style="left:1399.7px;top:853.8px;width:5.4px;height:16px;background:#767676;border-radius:1px;"></div>
<div class="b" style="left:1342.3px;top:875.9px;width:85.4px;height:3.9px;background:#1c1c1c;border-radius:1.95px;"></div>
<div class="b" style="left:1339.9px;top:873.7px;width:8.2px;height:8.2px;background:#8a8a8a;border-radius:50%;"></div>
<div class="b" style="left:1506.2px;top:844.9px;width:187.8px;height:53px;background:rgba(51,51,51,0.85);border-radius:0 0 7px 7px;"></div>
<div class="b" style="left:1506.2px;top:816.1px;width:187.8px;height:28.8px;background:rgba(82,82,82,0.85);border-radius:7px 7px 0 0;"></div>
<span class="t" style="left:1574.64px;top:823.25px;font-size:13.7px;line-height:18px;color:#ff6c00;font-weight:700;letter-spacing:-0.12px;">Multiply</span>
<span class="t" style="left:1534.5px;top:852.14px;font-size:12px;line-height:16px;color:#dedede;">Left</span>
<span class="t" style="left:1534.5px;top:876.14px;font-size:12px;line-height:16px;color:#dedede;">Right</span>
<div class="b" style="left:1815.9px;top:702.8px;width:126px;height:51px;background:rgba(51,51,51,0.85);border-radius:0 0 7px 7px;"></div>
<div class="b" style="left:1815.9px;top:674px;width:126px;height:28.8px;background:rgba(82,82,82,0.85);border-radius:7px 7px 0 0;"></div>
<span class="t" style="left:1845.41px;top:681.15px;font-size:13.7px;line-height:18px;color:#ff6c00;font-weight:700;letter-spacing:-0.12px;">Smooth</span>
<div class="b" style="left:1849.9px;top:717.6px;width:17.2px;height:4.9px;background:#555555;border-radius:2.45px;"></div>
<div class="b" style="left:1886.1px;top:717.6px;width:20.5px;height:4.9px;background:#767676;border-radius:2.45px;"></div>
<div class="b" style="left:1893.6px;top:711.7px;width:5.4px;height:16px;background:#767676;border-radius:1px;"></div>
<div class="b" style="left:1836.2px;top:733.8px;width:85.4px;height:3.9px;background:#1c1c1c;border-radius:1.95px;"></div>
<div class="b" style="left:1833.8px;top:731.6px;width:8.2px;height:8.2px;background:#8a8a8a;border-radius:50%;"></div>
<div class="b" style="left:2810.1px;top:672.9px;width:126px;height:51px;background:rgba(51,51,51,0.85);border-radius:0 0 7px 7px;"></div>
<div class="b" style="left:2810.1px;top:644.1px;width:126px;height:28.8px;background:rgba(82,82,82,0.85);border-radius:7px 7px 0 0;"></div>
<span class="t" style="left:2853.5px;top:651.25px;font-size:13.7px;line-height:18px;color:#ff6c00;font-weight:700;letter-spacing:-0.12px;">Mix</span>
<div class="b" style="left:2844.1px;top:687.7px;width:17.2px;height:4.9px;background:#767676;border-radius:2.45px;"></div>
<div class="b" style="left:2880.3px;top:687.7px;width:20.5px;height:4.9px;background:#585858;border-radius:2.45px;"></div>
<div class="b" style="left:2887.8px;top:681.8px;width:5.4px;height:16px;background:#585858;border-radius:1px;"></div>
<div class="b" style="left:2830.4px;top:703.9px;width:85.4px;height:3.9px;background:#1c1c1c;border-radius:1.95px;"></div>
<div class="b" style="left:2830.4px;top:703.9px;width:83.7px;height:3.9px;background:#585858;border-radius:1.95px;"></div>
<div class="b" style="left:2910px;top:701.7px;width:8.2px;height:8.2px;background:#8a8a8a;border-radius:50%;"></div>
<div class="b" style="left:2810.1px;top:783px;width:126px;height:51px;background:rgba(51,51,51,0.85);border-radius:0 0 7px 7px;"></div>
<div class="b" style="left:2810.1px;top:754.2px;width:126px;height:28.8px;background:rgba(82,82,82,0.85);border-radius:7px 7px 0 0;"></div>
<span class="t" style="left:2847.1px;top:761.35px;font-size:13.7px;line-height:18px;color:#ff6c00;font-weight:700;letter-spacing:-0.12px;">Mode</span>
<div class="b" style="left:2826px;top:797.95px;width:94.1px;height:20px;background:#4b4b4b;border-radius:2.5px;"></div>
<span class="t" style="left:2837.7px;top:800.59px;font-size:10px;line-height:13px;color:#dedede;">Add</span>
</div>
<svg id="ports" width="3456" height="1240" viewBox="0 0 3456 1240">
<circle cx="198" cy="548.1" r="6.1" fill="#ff6c00"/>
<circle cx="284.1" cy="600.1" r="6.1" fill="#ff6c00"/>
<path d="M438 600.1 l5.9 -5.9 l5.9 5.9 l-5.9 5.9 z" fill="#ff6c00"/>
<path d="M686.1 600.1 l5.9 -5.9 l5.9 5.9 l-5.9 5.9 z" fill="#ff6c00"/>
<path d="M526.3 630.2 l5.9 -5.9 l5.9 5.9 l-5.9 5.9 z" fill="#ff6c00"/>
<path d="M526.3 654.2 l5.9 -5.9 l5.9 5.9 l-5.9 5.9 z" fill="#7c7c7c"/>
<path d="M772.05 600.1 l5.9 -5.9 l5.9 5.9 l-5.9 5.9 z" fill="#ff6c00"/>
<path d="M931.85 600.1 l5.9 -5.9 l5.9 5.9 l-5.9 5.9 z" fill="#ff6c00"/>
<path d="M772.05 642.2 l5.9 -5.9 l5.9 5.9 l-5.9 5.9 z" fill="#ff6c00"/>
<path d="M931.85 642.2 l5.9 -5.9 l5.9 5.9 l-5.9 5.9 z" fill="#ff6c00"/>
<circle cx="1185.9" cy="600.1" r="6.1" fill="#ff6c00"/>
<path d="M1020.2 630.2 l5.9 -5.9 l5.9 5.9 l-5.9 5.9 z" fill="#ff6c00"/>
<circle cx="1026.1" cy="654.2" r="6.1" fill="#ff6c00"/>
<circle cx="1026.1" cy="678.2" r="6.1" fill="#ff6c00"/>
<circle cx="1433.9" cy="600.1" r="6.1" fill="#ff6c00"/>
<circle cx="1274.1" cy="630.2" r="6.1" fill="#ff6c00"/>
<circle cx="1274.1" cy="654.2" r="6.1" fill="#ff6c00"/>
<circle cx="1520.2" cy="600.1" r="6.1" fill="#ff6c00"/>
<circle cx="1680" cy="600.1" r="6.1" fill="#ff6c00"/>
<circle cx="1520.2" cy="630.2" r="6.1" fill="#7c7c7c"/>
<circle cx="1520.2" cy="654.2" r="6.1" fill="#7c7c7c"/>
<circle cx="1520.2" cy="678.2" r="6.1" fill="#7c7c7c"/>
<circle cx="1520.2" cy="702.2" r="6.1" fill="#7c7c7c"/>
<circle cx="1520.2" cy="726.2" r="6.1" fill="#ff6c00"/>
<circle cx="1768.2" cy="600.1" r="6.1" fill="#ff6c00"/>
<circle cx="1928" cy="600.1" r="6.1" fill="#ff6c00"/>
<circle cx="1768.2" cy="630.2" r="6.1" fill="#ff6c00"/>
<circle cx="2014.2" cy="600.1" r="6.1" fill="#ff6c00"/>
<circle cx="2174" cy="600.1" r="6.1" fill="#ff6c00"/>
<circle cx="2014.2" cy="630.2" r="6.1" fill="#ff6c00"/>
<circle cx="2262.1" cy="548.2" r="6.1" fill="#ff6c00"/>
<circle cx="2421.9" cy="548.2" r="6.1" fill="#ff6c00"/>
<circle cx="2262.1" cy="578.3" r="6.1" fill="#7c7c7c"/>
<path d="M2413.7 576.4 h8 l-4 4.2 z" fill="#e0e0e0"/>
<circle cx="2262.1" cy="602.3" r="6.1" fill="#ff6c00"/>
<circle cx="2508.1" cy="548.2" r="6.1" fill="#ff6c00"/>
<circle cx="2667.9" cy="548.2" r="6.1" fill="#ff6c00"/>
<circle cx="2508.1" cy="578.3" r="6.1" fill="#7c7c7c"/>
<path d="M2659.7 576.4 h8 l-4 4.2 z" fill="#e0e0e0"/>
<circle cx="2762.1" cy="548.2" r="6.1" fill="#ff6c00"/>
<circle cx="2921.9" cy="548.2" r="6.1" fill="#ff6c00"/>
<circle cx="2762.1" cy="578.3" r="6.1" fill="#ff6c00"/>
<circle cx="2762.1" cy="602.3" r="6.1" fill="#7c7c7c"/>
<circle cx="3168" cy="548.2" r="6.1" fill="#ff6c00"/>
<circle cx="3008.2" cy="578.3" r="6.1" fill="#ff6c00"/>
<circle cx="3008.2" cy="602.3" r="6.1" fill="#ff6c00"/>
<circle cx="3008.2" cy="626.3" r="6.1" fill="#ff6c00"/>
<circle cx="3008.2" cy="650.3" r="6.1" fill="#ff6c00"/>
<circle cx="3256.2" cy="548.2" r="6.1" fill="#ff6c00"/>
<g transform="translate(3291.1,574.1) scale(1,1.04)"><rect x="0" y="0" width="28.9" height="27.9" rx="5.4" fill="#b8b8b8"/><path d="M3.9 14.7 L7.9 10.7 L15.5 18.8 L19.6 15 L25.1 20.4 V6.4 Q25.1 3.9 22.6 3.9 H6.4 Q3.9 3.9 3.9 6.4 Z" fill="#2f2f2f"/><circle cx="17.9" cy="9.1" r="2.15" fill="#b8b8b8"/></g>
<circle cx="2670.1" cy="440.2" r="6.1" fill="#ff6c00"/>
<g transform="translate(2606.2,468.4) scale(1,1)"><rect x="0" y="0" width="28.9" height="27.9" rx="5.4" fill="#b8b8b8"/><path d="M3.9 14.7 L7.9 10.7 L15.5 18.8 L19.6 15 L25.1 20.4 V6.4 Q25.1 3.9 22.6 3.9 H6.4 Q3.9 3.9 3.9 6.4 Z" fill="#2f2f2f"/><circle cx="17.9" cy="9.1" r="2.15" fill="#b8b8b8"/></g>
<circle cx="940.1" cy="738.3" r="6.1" fill="#ff6c00"/>
<circle cx="940.1" cy="848.2" r="6.1" fill="#ff6c00"/>
<circle cx="940.1" cy="950.3" r="6.1" fill="#ff6c00"/>
<circle cx="1185.9" cy="876.1" r="6.1" fill="#ff6c00"/>
<path d="M1020.2 906.2 l5.9 -5.9 l5.9 5.9 l-5.9 5.9 z" fill="#ff6c00"/>
<circle cx="1026.1" cy="930.2" r="6.1" fill="#ff6c00"/>
<circle cx="1026.1" cy="954.2" r="6.1" fill="#ff6c00"/>
<circle cx="1434" cy="722.4" r="6.1" fill="#ff6c00"/>
<circle cx="1434" cy="830.2" r="6.1" fill="#ff6c00"/>
<circle cx="1680" cy="830.2" r="6.1" fill="#ff6c00"/>
<circle cx="1520.2" cy="860.3" r="6.1" fill="#ff6c00"/>
<circle cx="1520.2" cy="884.3" r="6.1" fill="#ff6c00"/>
<circle cx="1927.9" cy="688.1" r="6.1" fill="#ff6c00"/>
<circle cx="2922.1" cy="658.2" r="6.1" fill="#ff6c00"/>
<circle cx="2922.1" cy="768.3" r="6.1" fill="#ff6c00"/>
<path d="M2905.8 806.2 h8 l-4 4.2 z" fill="#e0e0e0"/>
</svg>
<div class="b" style="left:2px;top:1238px;width:452px;height:52px;background:#212121;border-radius:0 7px 0 0;"></div>
<div class="b" style="left:458.2px;top:1238px;width:455.6px;height:52px;background:#303030;border-radius:7px 7px 0 0;"></div>
<div class="b" style="left:2px;top:1290px;width:911.8px;height:888px;background:#303030;"></div>
<div class="b" style="left:898px;top:1290.2px;width:15.4px;height:525.4px;background:#4c4c4c;border-radius:7.7px;"></div>
<span class="t" style="left:197.3px;top:1245.68px;font-size:24.6px;line-height:32px;color:#828282;font-weight:700;letter-spacing:-0.23px;-webkit-text-stroke:0.5px #828282;">Node</span>
<span class="t" style="left:652.5px;top:1245.68px;font-size:24.6px;line-height:32px;color:#d8d8d8;font-weight:700;letter-spacing:-0.65px;-webkit-text-stroke:0.5px #d8d8d8;">Patch</span>
<span class="t" style="left:168.1px;top:1336.73px;font-size:25.6px;line-height:33px;color:#8c8c8c;font-weight:700;letter-spacing:-1.37px;-webkit-text-stroke:0.5px #8c8c8c;">PATCH</span>
<div class="b" style="left:270.1px;top:1388.2px;width:597.8px;height:45.6px;background:#212121;border-radius:5.5px;"></div>
<span class="t" style="left:280.2px;top:1395.48px;font-size:24.6px;line-height:32px;color:#dcdcdc;letter-spacing:-0.13px;-webkit-text-stroke:0.3px #dcdcdc;">Slice Colorize by Tijn</span>
<span class="t" style="left:93.9px;top:1395.48px;font-size:24.6px;line-height:32px;color:#d2d2d2;-webkit-text-stroke:0.3px #d2d2d2;">Display Name</span>
<div class="b" style="left:270.1px;top:1446.2px;width:597.8px;height:165.6px;background:#212121;border-radius:5.5px;"></div>
<span class="t" style="left:120.2px;top:1453.48px;font-size:24.6px;line-height:32px;color:#d2d2d2;letter-spacing:0.37px;-webkit-text-stroke:0.3px #d2d2d2;">Description</span>
<div class="b" style="left:270.1px;top:1624.2px;width:597.8px;height:45.6px;background:#4e4e4e;border-radius:5.5px;"></div>
<span class="t" style="left:282.3px;top:1630.08px;font-size:24.6px;line-height:32px;color:#dcdcdc;letter-spacing:-0.55px;-webkit-text-stroke:0.3px #dcdcdc;">Effect</span>
<span class="t" style="left:146.3px;top:1631.48px;font-size:24.6px;line-height:32px;color:#d2d2d2;letter-spacing:0.13px;-webkit-text-stroke:0.3px #d2d2d2;">Category</span>
<div class="b" style="left:270.1px;top:1682.2px;width:597.8px;height:45.6px;background:#4e4e4e;border-radius:5.5px;"></div>
<span class="t" style="left:282.3px;top:1688.08px;font-size:24.6px;line-height:32px;color:#dcdcdc;letter-spacing:-0.77px;-webkit-text-stroke:0.3px #dcdcdc;">1920 x 1080 (1080p, Full HD)</span>
<span class="t" style="left:129.1px;top:1689.48px;font-size:24.6px;line-height:32px;color:#d2d2d2;letter-spacing:0.18px;-webkit-text-stroke:0.3px #d2d2d2;">Resolution</span>
<div class="b" style="left:270.1px;top:1740.2px;width:597.8px;height:45.6px;background:#4e4e4e;border-radius:5.5px;"></div>
<span class="t" style="left:282.3px;top:1746.08px;font-size:24.6px;line-height:32px;color:#dcdcdc;letter-spacing:-0.38px;-webkit-text-stroke:0.3px #dcdcdc;">8bpc (int)</span>
<span class="t" style="left:71.8px;top:1747.48px;font-size:24.6px;line-height:32px;color:#d2d2d2;letter-spacing:0.01px;-webkit-text-stroke:0.3px #d2d2d2;">Texture Bit De...</span>
<span class="t" style="left:142.8px;top:1828.63px;font-size:25.6px;line-height:33px;color:#8c8c8c;font-weight:700;letter-spacing:-1.36px;-webkit-text-stroke:0.5px #8c8c8c;">CREDITS</span>
<div class="b" style="left:270.1px;top:1880px;width:597.8px;height:45.6px;background:#212121;border-radius:5.5px;"></div>
<span class="t" style="left:280.2px;top:1887.28px;font-size:24.6px;line-height:32px;color:#dcdcdc;letter-spacing:0.36px;-webkit-text-stroke:0.3px #dcdcdc;">Tijn</span>
<span class="t" style="left:170.1px;top:1887.28px;font-size:24.6px;line-height:32px;color:#d2d2d2;letter-spacing:0.88px;-webkit-text-stroke:0.3px #d2d2d2;">Author</span>
<div class="b" style="left:270.1px;top:1938px;width:597.8px;height:45.6px;background:#212121;border-radius:5.5px;"></div>
<span class="t" style="left:280.2px;top:1945.28px;font-size:24.6px;line-height:32px;color:#dcdcdc;letter-spacing:0.24px;-webkit-text-stroke:0.3px #dcdcdc;">Noodle Design</span>
<span class="t" style="left:167px;top:1945.28px;font-size:24.6px;line-height:32px;color:#d2d2d2;letter-spacing:0.41px;-webkit-text-stroke:0.3px #d2d2d2;">Vendor</span>
<div class="b" style="left:270.1px;top:1996px;width:597.8px;height:45.6px;background:#212121;border-radius:5.5px;"></div>
<span class="t" style="left:280.2px;top:2003.28px;font-size:24.6px;line-height:32px;color:#dcdcdc;letter-spacing:0.32px;-webkit-text-stroke:0.3px #dcdcdc;">inf0@noodledesign.nl</span>
<span class="t" style="left:179.5px;top:2003.28px;font-size:24.6px;line-height:32px;color:#d2d2d2;letter-spacing:-0.44px;-webkit-text-stroke:0.3px #d2d2d2;">E-mail</span>
<div class="b" style="left:270.1px;top:2054px;width:597.8px;height:45.6px;background:#212121;border-radius:5.5px;"></div>
<span class="t" style="left:203.7px;top:2061.28px;font-size:24.6px;line-height:32px;color:#d2d2d2;letter-spacing:-2.96px;-webkit-text-stroke:0.3px #d2d2d2;">URL</span>
<span class="t" style="left:143.6px;top:2142.23px;font-size:25.6px;line-height:33px;color:#8c8c8c;font-weight:700;letter-spacing:-1.26px;-webkit-text-stroke:0.5px #8c8c8c;">LICENSE</span>
<div class="b" style="left:920px;top:1238px;width:149.6px;height:52px;background:#212121;border-radius:7px 7px 0 0;"></div>
<span class="t" style="left:954.8px;top:1245.68px;font-size:24.6px;line-height:32px;color:#828282;font-weight:700;letter-spacing:-0.07px;-webkit-text-stroke:0.5px #828282;">Library</span>
<div class="b" style="left:1074px;top:1238px;width:147.9px;height:52px;background:#212121;border-radius:7px 7px 0 0;"></div>
<span class="t" style="left:1089.35px;top:1245.68px;font-size:24.6px;line-height:32px;color:#828282;font-weight:700;letter-spacing:-1.01px;-webkit-text-stroke:0.5px #828282;">Resources</span>
<div class="b" style="left:1226.3px;top:1238px;width:147.5px;height:52px;background:#303030;border-radius:7px 7px 0 0;"></div>
<span class="t" style="left:1236.75px;top:1245.68px;font-size:24.6px;line-height:32px;color:#d8d8d8;font-weight:700;letter-spacing:-0.35px;-webkit-text-stroke:0.5px #d8d8d8;">Dashboard</span>
<div class="b" style="left:1378.2px;top:1238px;width:147.4px;height:52px;background:#212121;border-radius:7px 7px 0 0;"></div>
<span class="t" style="left:1422.5px;top:1245.68px;font-size:24.6px;line-height:32px;color:#828282;font-weight:700;letter-spacing:-0.54px;-webkit-text-stroke:0.5px #828282;">Stats</span>
<div class="b" style="left:1530.1px;top:1238px;width:147.4px;height:52px;background:#212121;border-radius:7px 7px 0 0;"></div>
<span class="t" style="left:1583.65px;top:1245.68px;font-size:24.6px;line-height:32px;color:#828282;font-weight:700;letter-spacing:-2.39px;-webkit-text-stroke:0.5px #828282;">Log</span>
<div class="b" style="left:1681.9px;top:1238px;width:151.9px;height:52px;background:#212121;border-radius:7px 7px 0 0;"></div>
<span class="t" style="left:1730.7px;top:1245.68px;font-size:24.6px;line-height:32px;color:#828282;font-weight:700;letter-spacing:-0.3px;-webkit-text-stroke:0.5px #828282;">Help</span>
<div class="b" style="left:920px;top:1290px;width:913.8px;height:888px;background:#303030;"></div>
<span class="t" style="left:1072.3px;top:1336.73px;font-size:25.6px;line-height:33px;color:#8c8c8c;font-weight:700;letter-spacing:0.16px;-webkit-text-stroke:0.5px #8c8c8c;">INPUTS</span>
<div class="b" style="left:1190px;top:1388px;width:613.6px;height:45.6px;background:#4e4e4e;border-radius:5.5px;"></div>
<span class="t" style="left:1202.1px;top:1393.88px;font-size:24.6px;line-height:32px;color:#dcdcdc;letter-spacing:-1.14px;-webkit-text-stroke:0.3px #dcdcdc;">Add</span>
<span class="t" style="left:1104.2px;top:1395.28px;font-size:24.6px;line-height:32px;color:#d2d2d2;letter-spacing:0.42px;-webkit-text-stroke:0.3px #d2d2d2;">Mode</span>
<div class="b" style="left:1190px;top:1446px;width:150px;height:45.6px;background:#212121;border-radius:5.5px;"></div>
<span class="t" style="left:1200.4px;top:1453.28px;font-size:24.6px;line-height:32px;color:#dcdcdc;-webkit-text-stroke:0.3px #dcdcdc;">1</span>
<div class="b" style="left:1366px;top:1466px;width:16.9px;height:5px;background:#777777;border-radius:2.5px;"></div>
<div class="b" style="left:1402.1px;top:1466px;width:20.7px;height:5px;background:#555555;border-radius:2.5px;"></div>
<div class="b" style="left:1410px;top:1458.2px;width:5px;height:20.6px;background:#555555;border-radius:2.5px;"></div>
<div class="b" style="left:1453.4px;top:1464px;width:341px;height:9.6px;background:#1c1c1c;border-radius:4.8px;"></div>
<div class="b" style="left:1453.4px;top:1464px;width:336.5px;height:9.6px;background:#555555;border-radius:4.8px;"></div>
<div class="b" style="left:1777.75px;top:1456.5px;width:24.3px;height:24.3px;background:#808080;border-radius:50%;"></div>
<span class="t" style="left:1127.9px;top:1453.28px;font-size:24.6px;line-height:32px;color:#d2d2d2;letter-spacing:0.42px;-webkit-text-stroke:0.3px #d2d2d2;">Mix</span>
<div class="b" style="left:1190px;top:1504px;width:150px;height:45.6px;background:#ffffff;border-radius:5.5px;"></div>
<span class="t" style="left:1125.5px;top:1511.28px;font-size:24.6px;line-height:32px;color:#d2d2d2;letter-spacing:0.93px;-webkit-text-stroke:0.3px #d2d2d2;">Min</span>
<div class="b" style="left:1190px;top:1562px;width:150px;height:45.6px;background:#f50000;border-radius:5.5px;"></div>
<span class="t" style="left:1125.9px;top:1569.28px;font-size:24.6px;line-height:32px;color:#d2d2d2;letter-spacing:0.73px;-webkit-text-stroke:0.3px #d2d2d2;">Mid</span>
<div class="b" style="left:1190px;top:1620px;width:150px;height:45.6px;background:#000000;border-radius:5.5px;"></div>
<span class="t" style="left:1120.7px;top:1627.28px;font-size:24.6px;line-height:32px;color:#d2d2d2;letter-spacing:-0.09px;-webkit-text-stroke:0.3px #d2d2d2;">Max</span>
<div class="b" style="left:1190px;top:1678px;width:150px;height:45.6px;background:#212121;border-radius:5.5px;"></div>
<span class="t" style="left:1200.4px;top:1685.28px;font-size:24.6px;line-height:32px;color:#dcdcdc;-webkit-text-stroke:0.3px #dcdcdc;">0</span>
<div class="b" style="left:1366px;top:1698px;width:16.9px;height:5px;background:#555555;border-radius:2.5px;"></div>
<div class="b" style="left:1402.1px;top:1698px;width:20.7px;height:5px;background:#777777;border-radius:2.5px;"></div>
<div class="b" style="left:1410px;top:1690.2px;width:5px;height:20.6px;background:#777777;border-radius:2.5px;"></div>
<div class="b" style="left:1453.4px;top:1696px;width:341px;height:9.6px;background:#1c1c1c;border-radius:4.8px;"></div>
<div class="b" style="left:1445.75px;top:1688.5px;width:24.3px;height:24.3px;background:#808080;border-radius:50%;"></div>
<span class="t" style="left:1051.4px;top:1685.28px;font-size:24.6px;line-height:32px;color:#d2d2d2;letter-spacing:0.08px;-webkit-text-stroke:0.3px #d2d2d2;">Color Shift</span>
<div class="b" style="left:1190px;top:1736px;width:150px;height:45.6px;background:#212121;border-radius:5.5px;"></div>
<span class="t" style="left:1200.4px;top:1743.28px;font-size:24.6px;line-height:32px;color:#dcdcdc;-webkit-text-stroke:0.3px #dcdcdc;">0</span>
<div class="b" style="left:1366px;top:1756px;width:16.9px;height:5px;background:#555555;border-radius:2.5px;"></div>
<div class="b" style="left:1402.1px;top:1756px;width:20.7px;height:5px;background:#777777;border-radius:2.5px;"></div>
<div class="b" style="left:1410px;top:1748.2px;width:5px;height:20.6px;background:#777777;border-radius:2.5px;"></div>
<div class="b" style="left:1453.4px;top:1754px;width:341px;height:9.6px;background:#1c1c1c;border-radius:4.8px;"></div>
<div class="b" style="left:1445.75px;top:1746.5px;width:24.3px;height:24.3px;background:#808080;border-radius:50%;"></div>
<span class="t" style="left:1080px;top:1743.28px;font-size:24.6px;line-height:32px;color:#d2d2d2;letter-spacing:0.44px;-webkit-text-stroke:0.3px #d2d2d2;">Smooth</span>
<div class="b" style="left:1190px;top:1794px;width:150px;height:45.6px;background:#212121;border-radius:5.5px;"></div>
<span class="t" style="left:1200.4px;top:1801.28px;font-size:24.6px;line-height:32px;color:#dcdcdc;letter-spacing:-0.6px;-webkit-text-stroke:0.3px #dcdcdc;">0.5</span>
<div class="b" style="left:1366px;top:1814px;width:16.9px;height:5px;background:#777777;border-radius:2.5px;"></div>
<div class="b" style="left:1402.1px;top:1814px;width:20.7px;height:5px;background:#777777;border-radius:2.5px;"></div>
<div class="b" style="left:1410px;top:1806.2px;width:5px;height:20.6px;background:#777777;border-radius:2.5px;"></div>
<div class="b" style="left:1453.4px;top:1812px;width:341px;height:9.6px;background:#1c1c1c;border-radius:4.8px;"></div>
<div class="b" style="left:1453.4px;top:1812px;width:170.5px;height:9.6px;background:#555555;border-radius:4.8px;"></div>
<div class="b" style="left:1611.75px;top:1804.5px;width:24.3px;height:24.3px;background:#808080;border-radius:50%;"></div>
<span class="t" style="left:1110.2px;top:1801.28px;font-size:24.6px;line-height:32px;color:#d2d2d2;letter-spacing:-1.12px;-webkit-text-stroke:0.3px #d2d2d2;">Skew</span>
<div class="b" style="left:1190px;top:1852.2px;width:613.6px;height:45.6px;background:#4e4e4e;border-radius:5.5px;"></div>
<span class="t" style="left:1202.1px;top:1858.08px;font-size:24.6px;line-height:32px;color:#dcdcdc;letter-spacing:-0.66px;-webkit-text-stroke:0.3px #dcdcdc;">Grid 4 x 4</span>
<span class="t" style="left:1088.4px;top:1859.48px;font-size:24.6px;line-height:32px;color:#d2d2d2;letter-spacing:-0.3px;-webkit-text-stroke:0.3px #d2d2d2;">Slice In</span>
<div class="b" style="left:1190px;top:1910.2px;width:613.6px;height:45.6px;background:#4e4e4e;border-radius:5.5px;"></div>
<span class="t" style="left:1202.1px;top:1916.08px;font-size:24.6px;line-height:32px;color:#dcdcdc;letter-spacing:-0.92px;-webkit-text-stroke:0.3px #dcdcdc;">Test Card</span>
<span class="t" style="left:1055.8px;top:1917.48px;font-size:24.6px;line-height:32px;color:#d2d2d2;letter-spacing:0.35px;-webkit-text-stroke:0.3px #d2d2d2;">Texture In</span>
<span class="t" style="left:1724.6px;top:1332.78px;font-size:29.5px;line-height:38px;color:#bebebe;-webkit-text-stroke:0.9px #bebebe;">P</span>
<div class="b" style="left:1840px;top:1238px;width:1614px;height:52px;background:#303030;border-radius:7px 0 0 0;"></div>
<span class="t" style="left:2600.1px;top:1245.38px;font-size:24.6px;line-height:32px;color:#d6d6d6;font-weight:700;letter-spacing:0.47px;-webkit-text-stroke:0.5px #d6d6d6;">Monitor</span>
<div class="b" style="left:1840px;top:1290px;width:1614px;height:840px;background:#0a0a0a;"></div>
<div class="b" style="left:1844px;top:1294px;width:1606px;height:832px;background:#000000;"></div>
<div class="b" id="checker" style="left:1907px;top:1294px;width:1480px;height:832px;background:conic-gradient(#000 25%,#333 0 50%,#000 0 75%,#333 0) 0 0/41.62px 41.62px"></div>
<div class="b" style="left:1917.41px;top:1304.41px;width:349.19px;height:187.31px;background:rgb(255,255,255);"></div>
<div class="b" style="left:2287.41px;top:1304.41px;width:349.19px;height:187.31px;background:rgb(254,219,219);"></div>
<div class="b" style="left:2657.41px;top:1304.41px;width:349.19px;height:187.31px;background:rgb(252,182,182);"></div>
<div class="b" style="left:3027.41px;top:1304.41px;width:349.19px;height:187.31px;background:rgb(251,146,146);"></div>
<div class="b" style="left:1917.41px;top:1512.53px;width:349.19px;height:187.31px;background:rgb(249,109,109);"></div>
<div class="b" style="left:2287.41px;top:1512.53px;width:349.19px;height:187.31px;background:rgb(248,73,73);"></div>
<div class="b" style="left:2657.41px;top:1512.53px;width:349.19px;height:187.31px;background:rgb(246,36,36);"></div>
<div class="b" style="left:3027.41px;top:1512.53px;width:349.19px;height:187.31px;background:rgb(245,0,0);"></div>
<div class="b" style="left:1917.41px;top:1720.66px;width:349.19px;height:187.31px;background:rgb(245,0,0);"></div>
<div class="b" style="left:2287.41px;top:1720.66px;width:349.19px;height:187.31px;background:rgb(210,0,0);"></div>
<div class="b" style="left:2657.41px;top:1720.66px;width:349.19px;height:187.31px;background:rgb(175,0,0);"></div>
<div class="b" style="left:3027.41px;top:1720.66px;width:349.19px;height:187.31px;background:rgb(140,0,0);"></div>
<div class="b" style="left:1917.41px;top:1928.78px;width:349.19px;height:187.31px;background:rgb(105,0,0);"></div>
<div class="b" style="left:2287.41px;top:1928.78px;width:349.19px;height:187.31px;background:rgb(70,0,0);"></div>
<div class="b" style="left:2657.41px;top:1928.78px;width:349.19px;height:187.31px;background:rgb(35,0,0);"></div>
<div class="b" style="left:3027.41px;top:1928.78px;width:349.19px;height:187.31px;background:rgb(0,0,0);"></div>
<div class="b" style="left:1840px;top:2130px;width:1614px;height:48px;background:#303030;"></div>
<span class="t" style="left:1896.2px;top:2137.68px;font-size:24.6px;line-height:32px;color:#d2d2d2;letter-spacing:-0.04px;-webkit-text-stroke:0.3px #d2d2d2;">Texture Out - 1920 x 1080 - 8 Bit Unsigned RGBA (int)</span>
<svg id="panelicons" width="3456" height="2234" viewBox="0 0 3456 2234">
<path d="M836 1642.4 h17.8 l-8.9 9.4 z" fill="#dcdcdc"/>
<path d="M836 1700.4 h17.8 l-8.9 9.4 z" fill="#dcdcdc"/>
<path d="M836 1758.4 h17.8 l-8.9 9.4 z" fill="#dcdcdc"/>
<path d="M1771.7 1406.2 h17.8 l-8.9 9.4 z" fill="#dcdcdc"/>
<path d="M1771.7 1870.4 h17.8 l-8.9 9.4 z" fill="#dcdcdc"/>
<path d="M1771.7 1928.4 h17.8 l-8.9 9.4 z" fill="#dcdcdc"/>
<path d="M1737.9 1358.1 h7.2 l-3.6 5.1 z" fill="#bebebe"/>
<path d="M1777.97 1343.61 L1778.1 1340.67 L1783.1 1340.67 L1783.23 1343.61 L1784.75 1344.24 L1786.92 1342.25 L1790.45 1345.78 L1788.46 1347.95 L1789.09 1349.47 L1792.03 1349.6 L1792.03 1354.6 L1789.09 1354.73 L1788.46 1356.25 L1790.45 1358.42 L1786.92 1361.95 L1784.75 1359.96 L1783.23 1360.59 L1783.1 1363.53 L1778.1 1363.53 L1777.97 1360.59 L1776.45 1359.96 L1774.28 1361.95 L1770.75 1358.42 L1772.74 1356.25 L1772.11 1354.73 L1769.17 1354.6 L1769.17 1349.6 L1772.11 1349.47 L1772.74 1347.95 L1770.75 1345.78 L1774.28 1342.25 L1776.45 1344.24 Z" fill="#bebebe" stroke="#bebebe" stroke-width="1.2" stroke-linejoin="round"/><circle cx="1780.6" cy="1352.1" r="4.5" fill="#303030"/>
<path d="M3427.55 2144.89 L3427.67 2142.15 L3432.33 2142.15 L3432.45 2144.89 L3433.86 2145.47 L3435.89 2143.63 L3439.17 2146.91 L3437.33 2148.94 L3437.91 2150.35 L3440.65 2150.47 L3440.65 2155.13 L3437.91 2155.25 L3437.33 2156.66 L3439.17 2158.69 L3435.89 2161.97 L3433.86 2160.13 L3432.45 2160.71 L3432.33 2163.45 L3427.67 2163.45 L3427.55 2160.71 L3426.14 2160.13 L3424.11 2161.97 L3420.83 2158.69 L3422.67 2156.66 L3422.09 2155.25 L3419.35 2155.13 L3419.35 2150.47 L3422.09 2150.35 L3422.67 2148.94 L3420.83 2146.91 L3424.11 2143.63 L3426.14 2145.47 Z" fill="#bebebe" stroke="#bebebe" stroke-width="1.2" stroke-linejoin="round"/><circle cx="3430" cy="2152.8" r="4.2" fill="#303030"/>
<path d="M1849.2 2153.7 H1860" stroke="#8c8c8c" stroke-width="2" fill="none"/><path d="M1858.7 2146.4 H1862.6 Q1865.6 2150 1868.4 2150 Q1872 2150 1877.3 2146.4 V2160.9 Q1872 2157.4 1868.4 2157.4 Q1865.6 2157.4 1862.6 2160.9 H1858.7 Z" fill="#8c8c8c"/>
</svg>
</div>
</body></html>
